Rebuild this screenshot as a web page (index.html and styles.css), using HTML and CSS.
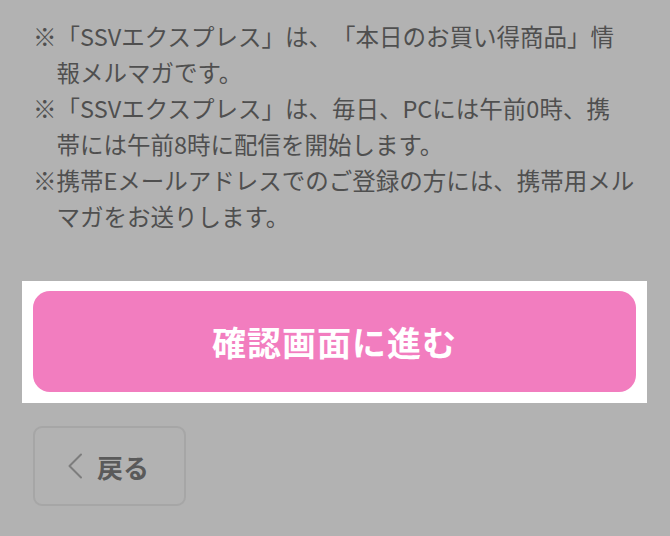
FILE: index.html
```html
<!DOCTYPE html>
<html lang="ja">
<head>
    <meta charset="UTF-8">
    <meta name="viewport" content="width=device-width, initial-scale=1.0">
    <title>SSVエクスプレス</title>
    <link rel="stylesheet" href="styles.css">
</head>
<body>
    <div class="page">
        <ul class="notes">
            <li>※「SSVエクスプレス」は、「本日のお買い得商品」情<br>報メルマガです。</li>
            <li>※「SSVエクスプレス」は、毎日、PCには午前0時、携<br>帯には午前8時に配信を開始します。</li>
            <li>※携帯Eメールアドレスでのご登録の方には、携帯用メル<br>マガをお送りします。</li>
        </ul>

        <div class="spotlight">
            <button class="confirmBtn">確認画面に進む</button>
        </div>

        <button class="backBtn">
            <svg class="backIcon" width="16" height="26" viewBox="0 0 16 26">
                <polyline points="14,1.5 2.5,13 14,24.5" fill="none" stroke="#7d7d7d" stroke-width="2" stroke-linecap="round" stroke-linejoin="round"/>
            </svg>
            <span>戻る</span>
        </button>
    </div>
</body>
</html>
```

FILE: styles.css
```css
body {
    margin: 0;
    background-color: #b2b2b2;
    font-family: "Noto Sans CJK JP", "Noto Sans", sans-serif;
}
.page {
    padding: 18px 23px 0 22px;
}
.notes {
    list-style: none;
    margin: 0 11px;
    padding: 0;
    font-size: 23.5px;
    line-height: 36px;
    color: #4f4f4f;
    white-space: nowrap;
    text-spacing-trim: space-all;
}
.notes li {
    padding-left: 1em;
    text-indent: -1em;
}
.spotlight {
    margin-top: 47px;
    background-color: #fff;
    padding: 10px 11px 11px;
}
.confirmBtn {
    display: block;
    width: 100%;
    height: 101px;
    border: none;
    border-radius: 17px;
    background-color: #f27dbf;
    color: #fff;
    font-family: inherit;
    font-size: 34px;
    font-weight: bold;
    letter-spacing: 1px;
    cursor: pointer;
}
.backBtn {
    display: flex;
    align-items: center;
    margin: 23px 0 0 11px;
    width: 153px;
    height: 80px;
    padding: 0 0 0 32px;
    border: 2px solid #a6a6a6;
    border-radius: 9px;
    background-color: #b2b2b2;
    color: #5a5a5a;
    font-family: inherit;
    font-size: 26px;
    font-weight: bold;
    cursor: pointer;
}
.backIcon {
    margin-right: 14px;
}
```
